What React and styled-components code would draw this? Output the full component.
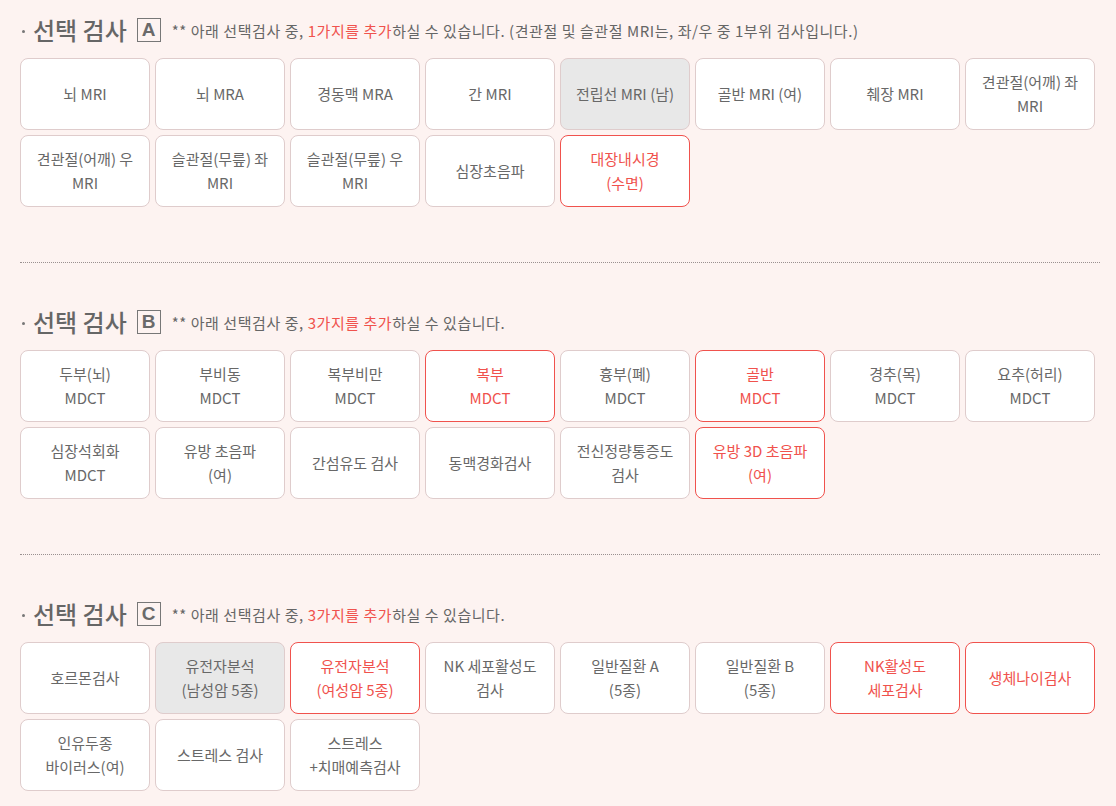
import React from "react";
import styled, { createGlobalStyle, css } from "styled-components";

const GlobalStyle = createGlobalStyle`
  html, body {
    margin: 0;
    padding: 0;
    background: #fdf3f1;
  }
  body {
    font-family: "Noto Sans CJK KR", "Noto Sans", sans-serif;
    color: #666;
  }
`;

const Page = styled.div`
  padding: 16px 0 15px 20px;
  width: 1080px;
`;

const Section = styled.section`
  display: flex;
  flex-direction: column;
`;

const Divider = styled.hr`
  width: 1080px;
  margin: 55px 0 45px;
  border: 0;
  border-top: 1px dotted #9a9090;
  height: 0;
`;

const Header = styled.div`
  display: flex;
  align-items: center;
  height: 28px;
  margin-bottom: 14px;
`;

const Bullet = styled.span`
  width: 3px;
  height: 3px;
  border-radius: 50%;
  background: #777;
  margin: 2px 8px 0 2px;
`;

const Title = styled.h2`
  margin: 0;
  font-size: 24px;
  font-weight: 500;
  color: #666;
  line-height: 28px;
  white-space: nowrap;
`;

const Badge = styled.span`
  box-sizing: border-box;
  width: 24px;
  height: 24px;
  margin-left: 10px;
  border: 1px solid #777;
  display: flex;
  align-items: center;
  justify-content: center;
  font-family: "Liberation Sans", Arial, sans-serif;
  font-weight: 700;
  font-size: 19px;
  color: #6a6a6a;
`;

const Note = styled.p`
  margin: 0 0 0 11px;
  font-size: 15px;
  letter-spacing: 0.55px;
  color: #666;
  white-space: nowrap;
  line-height: 24px;
  padding-top: 1px;
`;

const Em = styled.span`
  color: #f0524d;
`;

const Grid = styled.div`
  display: flex;
  flex-wrap: wrap;
  gap: 5px;
`;

const Option = styled.button`
  box-sizing: border-box;
  width: 130px;
  height: 72px;
  padding: 0 2px;
  border-radius: 8px;
  border: 1px solid #dfcccc;
  background: #fff;
  font-family: "Noto Sans CJK KR", "Noto Sans", sans-serif;
  font-size: 15px;
  line-height: 24px;
  color: #686868;
  display: flex;
  flex-direction: column;
  align-items: center;
  justify-content: center;
  cursor: pointer;
  ${(p) =>
    p.$variant === "red" &&
    css`
      border-color: #f0524d;
      color: #f0524d;
    `}
  ${(p) =>
    p.$variant === "gray" &&
    css`
      background: #e8e8e8;
    `}
`;

const Line = styled.span`
  display: block;
  white-space: nowrap;
`;

const sections = [
  {
    letter: "A",
    count: "1가지를 추가",
    extra: " (견관절 및 슬관절 MRI는, 좌/우 중 1부위 검사입니다.)",
    items: [
      { l: ["뇌 MRI"] },
      { l: ["뇌 MRA"] },
      { l: ["경동맥 MRA"] },
      { l: ["간 MRI"] },
      { l: ["전립선 MRI (남)"], v: "gray" },
      { l: ["골반 MRI (여)"] },
      { l: ["췌장 MRI"] },
      { l: ["견관절(어깨) 좌", "MRI"] },
      { l: ["견관절(어깨) 우", "MRI"] },
      { l: ["슬관절(무릎) 좌", "MRI"] },
      { l: ["슬관절(무릎) 우", "MRI"] },
      { l: ["심장초음파"] },
      { l: ["대장내시경", "(수면)"], v: "red" },
    ],
  },
  {
    letter: "B",
    count: "3가지를 추가",
    extra: "",
    items: [
      { l: ["두부(뇌)", "MDCT"] },
      { l: ["부비동", "MDCT"] },
      { l: ["복부비만", "MDCT"] },
      { l: ["복부", "MDCT"], v: "red" },
      { l: ["흉부(폐)", "MDCT"] },
      { l: ["골반", "MDCT"], v: "red" },
      { l: ["경추(목)", "MDCT"] },
      { l: ["요추(허리)", "MDCT"] },
      { l: ["심장석회화", "MDCT"] },
      { l: ["유방 초음파", "(여)"] },
      { l: ["간섬유도 검사"] },
      { l: ["동맥경화검사"] },
      { l: ["전신정량통증도", "검사"] },
      { l: ["유방 3D 초음파", "(여)"], v: "red" },
    ],
  },
  {
    letter: "C",
    count: "3가지를 추가",
    extra: "",
    items: [
      { l: ["호르몬검사"] },
      { l: ["유전자분석", "(남성암 5종)"], v: "gray" },
      { l: ["유전자분석", "(여성암 5종)"], v: "red" },
      { l: ["NK 세포활성도", "검사"] },
      { l: ["일반질환 A", "(5종)"] },
      { l: ["일반질환 B", "(5종)"] },
      { l: ["NK활성도", "세포검사"], v: "red" },
      { l: ["생체나이검사"], v: "red" },
      { l: ["인유두종", "바이러스(여)"] },
      { l: ["스트레스 검사"] },
      { l: ["스트레스", "+치매예측검사"] },
    ],
  },
];

export default function App() {
  return (
    <>
      <GlobalStyle />
      <Page>
        {sections.map((s, i) => (
          <React.Fragment key={s.letter}>
            {i > 0 && <Divider />}
            <Section>
              <Header>
                <Bullet />
                <Title>선택 검사</Title>
                <Badge>{s.letter}</Badge>
                <Note>
                  ** 아래 선택검사 중, <Em>{s.count}</Em>하실 수 있습니다.{s.extra}
                </Note>
              </Header>
              <Grid>
                {s.items.map((it, j) => (
                  <Option key={j} $variant={it.v}>
                    {it.l.map((t, k) => (
                      <Line key={k}>{t}</Line>
                    ))}
                  </Option>
                ))}
              </Grid>
            </Section>
          </React.Fragment>
        ))}
      </Page>
    </>
  );
}
